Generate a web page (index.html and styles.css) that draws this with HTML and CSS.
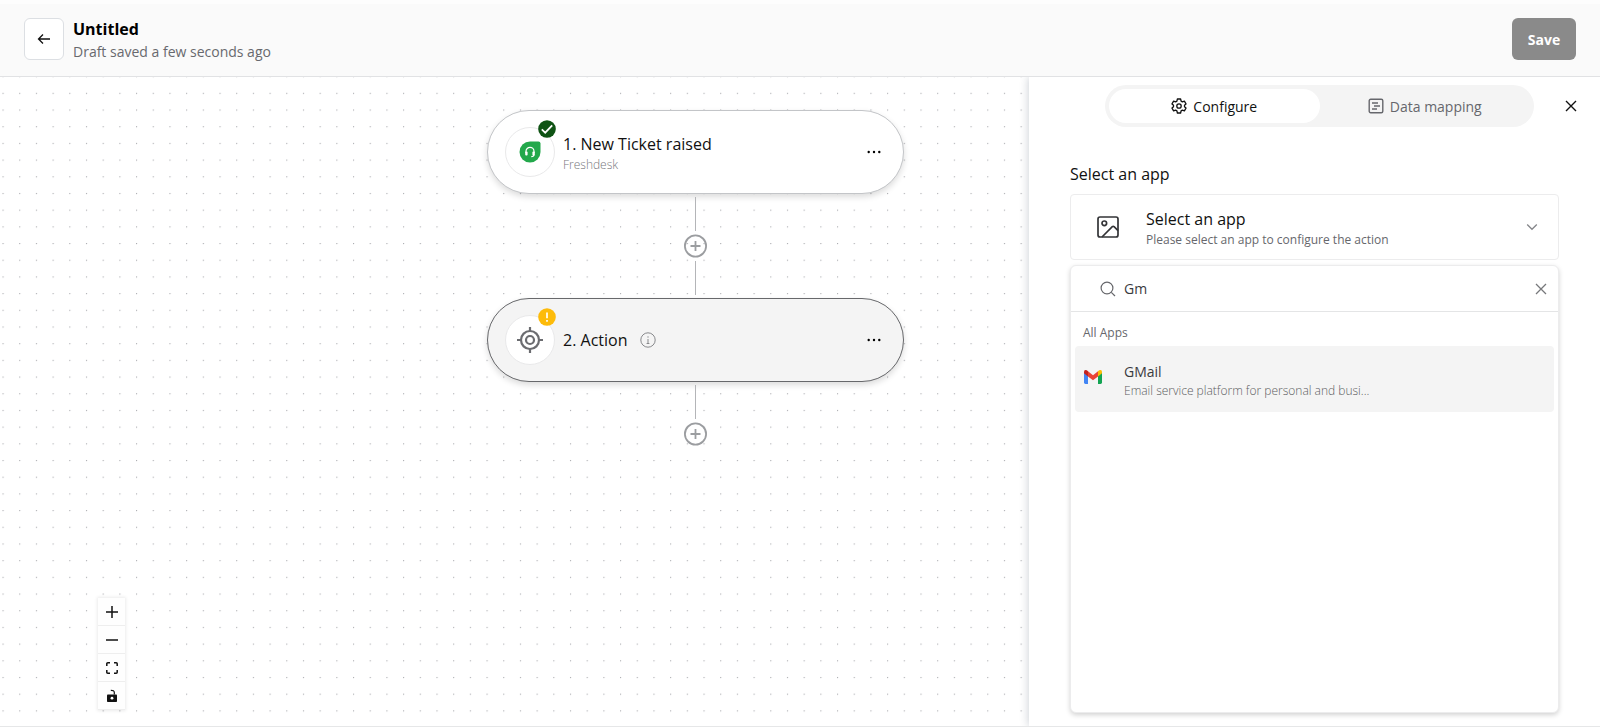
FILE: index.html
```html
<!DOCTYPE html>
<html lang="en">
<head>
    <meta charset="UTF-8">
    <meta name="viewport" content="width=device-width, initial-scale=1.0">
    <title>Untitled</title>
    <link rel="stylesheet" href="styles.css">
</head>
<body>

<header class="topbar">
    <button class="back" type="button" aria-label="Back">
        <svg width="14" height="14" viewBox="0 0 14 14" fill="none" stroke="#111" stroke-width="1.3"><path d="M13 7H1.5M6 2.5L1.5 7L6 11.5"/></svg>
    </button>
    <div class="heading">
        <h1>Untitled</h1>
        <p>Draft saved a few seconds ago</p>
    </div>
    <button class="save" type="button">Save</button>
</header>

<main class="workspace">
    <section class="canvas">
        <svg class="dots" width="100%" height="100%">
            <defs>
                <pattern id="dots" x="2.5" y="15.8" width="16.69" height="16.69" patternUnits="userSpaceOnUse">
                    <circle cx="0.6" cy="0.6" r="0.6" fill="#999ba0"/>
                </pattern>
            </defs>
            <rect width="100%" height="100%" fill="url(#dots)"/>
        </svg>

        <div class="flow">
            <article class="node">
                <div class="node-icon">
                    <svg width="22" height="22" viewBox="0 0 22 22">
                        <path d="M11 0.5H19.5Q21.5 0.5 21.5 2.5V11A10.5 10.5 0 1 1 11 0.5Z" fill="#22a84b"/>
                        <path d="M7 12V10.3A4 4 0 0 1 15 10.3V12M15 13.5Q15 15.6 12.3 15.6" fill="none" stroke="#fff" stroke-width="1.2"/>
                        <rect x="6.2" y="10.6" width="2.4" height="3.8" rx="0.9" fill="#fff"/>
                        <rect x="13.4" y="10.6" width="2.4" height="3.8" rx="0.9" fill="#fff"/>
                    </svg>
                    <svg class="badge" width="18" height="18" viewBox="0 0 18 18"><circle cx="9" cy="9" r="8.8" fill="#0f5314"/><path d="M3.8 9.3L7.2 12.7L14.2 5.3" fill="none" stroke="#fff" stroke-width="1.8"/></svg>
                </div>
                <div class="node-text">
                    <h2>1. New Ticket raised</h2>
                    <p>Freshdesk</p>
                </div>
                <button class="more" type="button" aria-label="Step 1 options">
                    <svg width="14" height="4" viewBox="0 0 14 4"><circle cx="1.7" cy="2" r="1.2"/><circle cx="7" cy="2" r="1.2"/><circle cx="12.3" cy="2" r="1.2"/></svg>
                </button>
            </article>

            <div class="line"></div>
            <button class="add" type="button" aria-label="Add step">
                <svg width="24" height="24" viewBox="0 0 24 24" fill="none" stroke="#9b9da0"><circle cx="11.5" cy="12" r="10.6" stroke-width="1.8"/><path d="M11.5 7V17M6.5 12H16.5" stroke-width="1.8"/></svg>
            </button>
            <div class="line"></div>

            <article class="node selected">
                <div class="node-icon">
                    <svg width="28" height="28" viewBox="0 0 28 28" fill="none" stroke="#6b6c70" stroke-width="2.2"><circle cx="14" cy="14" r="9"/><circle cx="14" cy="14" r="4"/><path d="M14 1V5M14 23V27M1 14H5M23 14H27"/></svg>
                    <svg class="badge" width="18" height="18" viewBox="0 0 18 18"><circle cx="9" cy="9" r="8.8" fill="#fdbb0a"/><path d="M9 4.4V10.2M9 12V13.8" stroke="#fff" stroke-width="1.7"/></svg>
                </div>
                <div class="node-text inline">
                    <h2>2. Action</h2>
                    <svg width="16" height="16" viewBox="0 0 16 16" fill="none" stroke="#88898c"><circle cx="8" cy="8" r="7.2"/><path d="M8 7V11.6M8 4.3V5.7M6.6 11.5H9.4"/></svg>
                </div>
                <button class="more" type="button" aria-label="Step 2 options">
                    <svg width="14" height="4" viewBox="0 0 14 4"><circle cx="1.7" cy="2" r="1.2"/><circle cx="7" cy="2" r="1.2"/><circle cx="12.3" cy="2" r="1.2"/></svg>
                </button>
            </article>

            <div class="line"></div>
            <button class="add" type="button" aria-label="Add step">
                <svg width="24" height="24" viewBox="0 0 24 24" fill="none" stroke="#9b9da0"><circle cx="11.5" cy="12" r="10.6" stroke-width="1.8"/><path d="M11.5 7V17M6.5 12H16.5" stroke-width="1.8"/></svg>
            </button>
        </div>

        <div class="controls">
            <button type="button" aria-label="Zoom in"><svg width="12" height="12" viewBox="0 0 12 12" stroke="#111" stroke-width="1.5"><path d="M6 0V12M0 6H12"/></svg></button>
            <button type="button" aria-label="Zoom out"><svg width="12" height="12" viewBox="0 0 12 12" stroke="#111" stroke-width="1.5"><path d="M0 6H12"/></svg></button>
            <button type="button" aria-label="Fit view"><svg width="12" height="12" viewBox="0 0 12 12" fill="none" stroke="#111" stroke-width="1.5"><path d="M0.8 4V1.8Q0.8 0.8 1.8 0.8H4M8 0.8H10.2Q11.2 0.8 11.2 1.8V4M11.2 8V10.2Q11.2 11.2 10.2 11.2H8M4 11.2H1.8Q0.8 11.2 0.8 10.2V8"/></svg></button>
            <button type="button" aria-label="Lock"><svg width="12" height="14" viewBox="0 0 12 14"><path d="M1.8 5.5H10.2Q11 5.5 11 6.3V12.2Q11 13 10.2 13H1.8Q1 13 1 12.2V6.3Q1 5.5 1.8 5.5Z" fill="#111"/><circle cx="6" cy="9.2" r="1.4" fill="#fff"/><path d="M8.3 5.5V3.5Q8.3 1.2 4.8 1.3" fill="none" stroke="#111" stroke-width="1.2"/></svg></button>
        </div>
    </section>

    <aside class="panel">
        <div class="panel-top">
            <div class="tabs" role="tablist">
                <button class="tab active" type="button" role="tab" aria-selected="true">
                    <svg width="16" height="16" viewBox="0 0 16 16" fill="none" stroke="currentColor" stroke-width="1.3" stroke-linejoin="round"><path d="M6.4 1H9.6L10.1 3.1L11.4 3.9L13.4 3.2L15 5.9L13.5 7.3V8.7L15 10.1L13.4 12.8L11.4 12.1L10.1 12.9L9.6 15H6.4L5.9 12.9L4.6 12.1L2.6 12.8L1 10.1L2.5 8.7V7.3L1 5.9L2.6 3.2L4.6 3.9L5.9 3.1Z"/><circle cx="8" cy="8" r="2.2"/></svg>
                    Configure
                </button>
                <button class="tab" type="button" role="tab" aria-selected="false">
                    <svg width="16" height="16" viewBox="0 0 16 16" fill="none" stroke="currentColor" stroke-width="1.4"><rect x="1.2" y="1.2" width="13.6" height="13.6" rx="1.5"/><path d="M4 5H10M6 8H12M4 11H9"/></svg>
                    Data mapping
                </button>
            </div>
            <button class="close" type="button" aria-label="Close">
                <svg width="12" height="12" viewBox="0 0 12 12" stroke="#111" stroke-width="1.4"><path d="M1 1L11 11M11 1L1 11"/></svg>
            </button>
        </div>

        <div class="field">
            <h3 id="app-label">Select an app</h3>
            <button class="app-select" type="button" aria-haspopup="listbox" aria-expanded="true" aria-labelledby="app-label">
                <svg width="24" height="24" viewBox="0 0 24 24" fill="none" stroke="#333437" stroke-width="1.7"><rect x="2" y="2" width="20" height="20" rx="2"/><circle cx="8.3" cy="8.3" r="2.3"/><path d="M6 22L16.3 11.7Q17.2 11 18.1 11.7L22 15.6"/></svg>
                <span class="app-select-text">
                    <strong>Select an app</strong>
                    <small>Please select an app to configure the action</small>
                </span>
                <svg width="12" height="8" viewBox="0 0 12 8" fill="none" stroke="#85868a" stroke-width="1.3"><path d="M1.2 1.5L6 6.3L10.8 1.5"/></svg>
            </button>

            <div class="dropdown">
                <div class="search">
                    <svg width="16" height="16" viewBox="0 0 16 16" fill="none" stroke="#66676b" stroke-width="1.2"><circle cx="7" cy="7" r="5.9"/><path d="M11.3 11.3L15 15"/></svg>
                    <input type="text" value="Gm" aria-label="Search apps">
                    <button class="clear" type="button" aria-label="Clear search">
                        <svg width="12" height="12" viewBox="0 0 12 12" stroke="#77787b" stroke-width="1.3"><path d="M1 1L11 11M11 1L1 11"/></svg>
                    </button>
                </div>
                <p class="group">All Apps</p>
                <ul class="apps" role="listbox" aria-label="All Apps">
                    <li class="app" role="option" aria-selected="true">
                        <svg width="20" height="16" viewBox="0 0 20 16">
                            <path d="M1 3V13.6Q1 15 2.4 15H5V6Z" fill="#4285f4"/>
                            <path d="M19 3V13.6Q19 15 17.6 15H15V6Z" fill="#13a452"/>
                            <path d="M15 2.3L16.2 1.3Q19 0 19 3V4.2L15 7.4Z" fill="#fbbc04"/>
                            <path d="M5 2.3L10 6.2L15 2.3V7.4L10 11.2L5 7.4Z" fill="#ea4335"/>
                            <path d="M5 2.3L3.8 1.3Q1 0 1 3V4.2L5 7.4Z" fill="#c5221f"/>
                        </svg>
                        <div class="app-text">
                            <h4>GMail</h4>
                            <p>Email service platform for personal and busi...</p>
                        </div>
                    </li>
                </ul>
            </div>
        </div>
    </aside>
</main>

</body>
</html>
```
FILE: styles.css
```css
* {
    box-sizing: border-box;
}
body {
    font-family: "Open Sans", "Noto Sans", sans-serif;
    display: flex;
    flex-direction: column;
    height: 100vh;
    margin: 0;
    color: #111;
    background: #fff;
}
h1, h2, h3, h4, p, ul {
    margin: 0;
    padding: 0;
    font-weight: 400;
}
button, input {
    font-family: inherit;
    color: inherit;
    padding: 0;
    border: 0;
    background: none;
}
button {
    cursor: pointer;
}
svg {
    display: block;
    flex: none;
}

/* top bar */
.topbar {
    display: flex;
    align-items: center;
    height: 77px;
    padding: 0 24px 2px;
    border-top: 4px solid #fdfdfd;
    border-bottom: 1px solid #e1e2e4;
    background: #fafafa;
}
.back {
    display: flex;
    align-items: center;
    justify-content: center;
    width: 40px;
    height: 42px;
    border: 1px solid #dcdfe3;
    border-radius: 6px;
    background: #fff;
}
.heading {
    flex: 1;
    margin-left: 9px;
    padding-top: 4px;
}
.heading h1 {
    font-size: 16px;
    line-height: 22px;
    font-weight: 700;
    color: #000;
}
.heading p {
    font-size: 14px;
    line-height: 24px;
    color: #68696e;
}
.save {
    width: 64px;
    height: 42px;
    border-radius: 6px;
    font-size: 14px;
    font-weight: 700;
    color: #fff;
    background: #8a8a8a;
}

/* canvas */
.workspace {
    display: flex;
    flex: 1;
    min-height: 0;
    overflow: hidden;
    border-bottom: 1px solid #e6e7e8;
}
.canvas {
    position: relative;
    flex: 1;
    overflow: hidden;
}
.flow {
    position: absolute;
    top: 33px;
    left: 487px;
    display: flex;
    flex-direction: column;
    align-items: center;
    gap: 3px;
    width: 417px;
}
.node {
    display: flex;
    align-items: center;
    width: 100%;
    height: 84px;
    padding: 0 22px 0 17px;
    border: 1px solid #c3c5c8;
    border-radius: 42px;
    background: #fff;
    box-shadow: 0 3px 6px rgba(0, 0, 0, 0.14);
}
.node.selected {
    border-color: #67686b;
    background: #f4f4f4;
}
.node-icon {
    position: relative;
    display: flex;
    align-items: center;
    justify-content: center;
    width: 50px;
    height: 50px;
    border: 1px solid #e9e9ea;
    border-radius: 50%;
    background: #fff;
}
.badge {
    position: absolute;
    top: -8px;
    right: -2px;
}
.node-text {
    flex: 1;
    margin-left: 8px;
    padding-top: 4px;
}
.node-text.inline {
    display: flex;
    align-items: center;
    gap: 13px;
    padding-top: 0;
}
.node-text h2 {
    font-size: 16px;
    line-height: 22px;
}
.node-text p {
    font-size: 12px;
    line-height: 20px;
    font-weight: 300;
    color: #77787c;
}
.more {
    padding: 8px 0;
}
.line {
    width: 1px;
    height: 34px;
    background: #b4b5b8;
}
.controls {
    position: absolute;
    left: 98px;
    bottom: 16px;
    display: flex;
    flex-direction: column;
    width: 27px;
    background: #fefefe;
    box-shadow: 0 0 3px 1px rgba(0, 0, 0, 0.08);
}
.controls button {
    display: flex;
    align-items: center;
    justify-content: center;
    height: 28px;
    border-bottom: 1px solid #eee;
}

/* side panel */
.panel {
    position: relative;
    display: flex;
    flex-direction: column;
    width: 571px;
    padding: 8px 23px 13px 41px;
    background: #fff;
    box-shadow: -1px 0 8px rgba(40, 60, 80, 0.22);
}
.panel-top {
    display: flex;
    align-items: center;
    gap: 31px;
    padding-left: 35px;
}
.tabs {
    display: flex;
    flex: 1;
    height: 42px;
    padding: 4px;
    border-radius: 21px;
    background: #f4f4f4;
}
.tab {
    display: flex;
    flex: 1;
    align-items: center;
    justify-content: center;
    gap: 6px;
    border-radius: 17px;
    font-size: 14px;
    color: #66676c;
}
.tab.active {
    color: #111;
    background: #fff;
}
.field {
    display: flex;
    flex: 1;
    flex-direction: column;
    margin: 36px 18px 0 0;
}
.field h3 {
    font-size: 16px;
    line-height: 22px;
    margin-bottom: 9px;
}
.app-select {
    display: flex;
    align-items: center;
    height: 66px;
    padding: 0 20px 0 25px;
    border: 1px solid #ececed;
    border-radius: 4px;
    text-align: left;
}
.app-select-text {
    display: flex;
    flex: 1;
    flex-direction: column;
    margin-left: 26px;
    padding-top: 4px;
}
.app-select-text strong {
    font-size: 16px;
    line-height: 22px;
    font-weight: 400;
}
.app-select-text small {
    font-size: 12px;
    line-height: 20px;
    color: #66676c;
}
.dropdown {
    flex: 1;
    margin-top: 5px;
    border: 1px solid #ececed;
    border-radius: 6px;
    background: #fff;
    box-shadow: 0 2px 5px rgba(0, 0, 0, 0.18);
}
.search {
    display: flex;
    align-items: center;
    height: 46px;
    padding: 0 11px 0 29px;
    border-bottom: 1px solid #e4e5e6;
}
.search input {
    flex: 1;
    min-width: 0;
    margin-left: 8px;
    font-size: 14px;
    color: #3a3b3e;
    outline: none;
}
.group {
    padding: 12px 12px 4px;
    font-size: 12px;
    line-height: 18px;
    color: #66676c;
}
.apps {
    padding: 0 4px;
    list-style: none;
}
.app {
    display: flex;
    align-items: center;
    height: 66px;
    padding: 0 8px;
    border-radius: 4px;
    background: #f4f4f4;
}
.app svg {
    margin-bottom: 4px;
}
.app-text {
    margin-left: 21px;
    padding-top: 6px;
}
.app-text h4 {
    font-size: 14px;
    line-height: 18px;
    color: #3a3b3e;
}
.app-text p {
    font-size: 12px;
    line-height: 20px;
    font-weight: 300;
    color: #5c5d61;
}
```
